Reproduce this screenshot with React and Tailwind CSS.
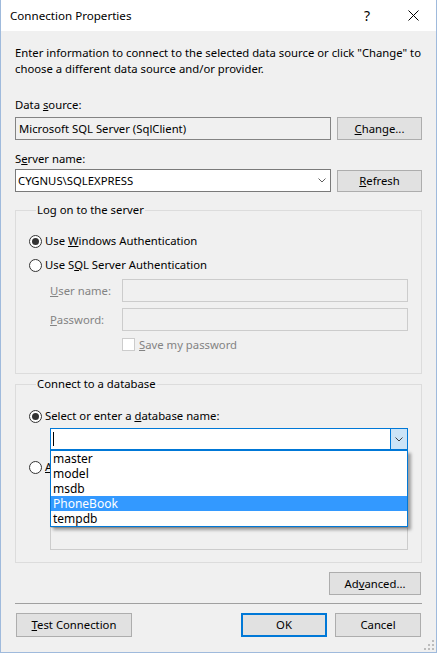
import React from 'react';

const font = { fontFamily: '"Noto Sans", "Open Sans", sans-serif' };

function Btn({ children, className = '', primary = false }) {
  return (
    <div
      className={`flex items-center justify-center bg-[#e1e1e1] text-black ${
        primary ? 'border-2 border-[#0078d7]' : 'border border-[#adadad]'
      } ${className}`}
    >
      {children}
    </div>
  );
}

function Radio({ checked, children }) {
  return (
    <div className="flex items-center h-[16px] gap-[3px]">
      <span className="flex items-center justify-center w-[13px] h-[13px] rounded-full border border-[#333333] bg-white shrink-0">
        {checked && <span className="w-[7px] h-[7px] rounded-full bg-[#333333]" />}
      </span>
      <span className="whitespace-nowrap">{children}</span>
    </div>
  );
}

function Chevron({ color = '#606060' }) {
  return (
    <svg width="8" height="5" viewBox="0 0 8 5">
      <path d="M0.5 0.5 L4 4 L7.5 0.5" fill="none" stroke={color} strokeWidth="1" />
    </svg>
  );
}

const databases = ['master', 'model', 'msdb', 'PhoneBook', 'tempdb'];

export default function App() {
  return (
    <div
      className="w-[437px] h-[653px] flex flex-col bg-[#f0f0f0] border-x border-b border-[#9fbadc] text-[11.3px] leading-[16px] text-black overflow-hidden select-none"
      style={font}
    >
      {/* Title bar */}
      <div className="h-[31px] shrink-0 bg-white flex items-center pl-[9px] text-[11.6px]">
        <span className="flex-1">Connection Properties</span>
        <span className="w-[46px] text-center text-[14px]">?</span>
        <span className="w-[46px] flex justify-center">
          <svg width="11" height="11" viewBox="0 0 11 11">
            <path d="M0.5 0.5 L10.5 10.5 M10.5 0.5 L0.5 10.5" stroke="#000" strokeWidth="1" />
          </svg>
        </span>
      </div>

      <div className="flex flex-col px-[14px]">
        <p className="mt-[14px]">
          Enter information to connect to the selected data source or click "Change" to choose a
          different data source and/or provider.
        </p>

        {/* Data source */}
        <div className="mt-[20px]">
          Data <u>s</u>ource:
        </div>
        <div className="mt-[4px] flex gap-[6px] h-[23px]">
          <div className="w-[316px] border border-[#838383] bg-[#f0f0f0] flex items-center pl-[3px]">
            Microsoft SQL Server (SqlClient)
          </div>
          <Btn className="w-[85px]">
            <span>
              <u>C</u>hange...
            </span>
          </Btn>
        </div>

        {/* Server name */}
        <div className="mt-[11px]">
          S<u>e</u>rver name:
        </div>
        <div className="mt-[2px] flex gap-[6px] h-[23px]">
          <div className="w-[316px] border border-[#7a7a7a] bg-white flex items-center pl-[2px]">
            <span className="flex-1">CYGNUS\SQLEXPRESS</span>
            <span className="w-[17px] flex justify-center">
              <Chevron />
            </span>
          </div>
          <Btn className="w-[85px] mt-[1px] h-[22px]">
            <span>
              <u>R</u>efresh
            </span>
          </Btn>
        </div>

        {/* Log on group */}
        <fieldset className="mt-[10px] border border-[#dcdcdc] pl-[13px] pr-[13px] pb-[22px]">
          <legend className="ml-[7px] px-[1px]">Log on to the server</legend>
          <div className="mt-[15px]">
            <Radio checked>
              Use <u>W</u>indows Authentication
            </Radio>
          </div>
          <div className="mt-[8px]">
            <Radio>
              Use S<u>Q</u>L Server Authentication
            </Radio>
          </div>
          <div className="mt-[6px] ml-[21px] flex items-center h-[23px] text-[#838383]">
            <span className="w-[72px]">
              <u>U</u>ser name:
            </span>
            <div className="flex-1 h-full border border-[#cccccc] bg-[#f0f0f0]" />
          </div>
          <div className="mt-[6px] ml-[21px] flex items-center h-[23px] text-[#838383]">
            <span className="w-[72px]">
              <u>P</u>assword:
            </span>
            <div className="flex-1 h-full border border-[#cccccc] bg-[#f0f0f0]" />
          </div>
          <div className="mt-[7px] ml-[93px] flex items-center h-[13px] gap-[4px] text-[#838383]">
            <span className="w-[13px] h-[13px] border border-[#cccccc] bg-white shrink-0" />
            <span>
              <u>S</u>ave my password
            </span>
          </div>
        </fieldset>

        {/* Connect to a database group */}
        <fieldset className="mt-[2px] border border-[#dcdcdc] pl-[13px] pr-[13px] pb-[12px]">
          <legend className="ml-[7px] px-[1px]">Connect to a database</legend>
          <div className="mt-[16px]">
            <Radio checked>
              Select or enter a <u>d</u>atabase name:
            </Radio>
          </div>
          <div className="relative mt-[4px] ml-[21px] z-10">
            <div className="h-[22px] border border-[#0078d7] bg-white flex">
              <div className="flex-1 flex items-center pl-[2px]">
                <span className="w-px h-[14px] bg-black" />
              </div>
              <div className="w-[17px] bg-[#cce4f7] border-l border-[#0078d7] flex items-center justify-center">
                <Chevron color="#404040" />
              </div>
            </div>
            {/* open dropdown list */}
            <ul className="absolute left-0 top-full w-full border border-[#0078d7] bg-white text-[12px] shadow-[3px_3px_3px_rgba(0,0,0,0.35)]">
              {databases.map((d) => (
                <li
                  key={d}
                  className={`h-[15px] leading-[15px] pl-[2px] ${
                    d === 'PhoneBook' ? 'bg-[#3399ff] text-white' : ''
                  }`}
                >
                  {d}
                </li>
              ))}
            </ul>
          </div>
          <div className="mt-[9px]">
            <Radio>
              <u>A</u>ttach a database file:
            </Radio>
          </div>
          <div className="mt-[6px] ml-[21px] h-[23px] border border-[#cccccc] bg-[#f0f0f0]" />
          <div className="mt-[23px] ml-[21px] h-[23px] border border-[#cccccc] bg-[#f0f0f0]" />
        </fieldset>

        <div className="mt-[9px] flex justify-end pr-[1px]">
          <Btn className="w-[92px] h-[23px]">
            <span>
              Ad<u>v</u>anced...
            </span>
          </Btn>
        </div>

        <div className="mt-[8px] h-px bg-[#a0a0a0]" />

        <div className="mt-[9px] flex items-center h-[24px] pr-[1px]">
          <Btn className="w-[116px] h-[24px] ml-[1px]">
            <span>
              <u>T</u>est Connection
            </span>
          </Btn>
          <div className="flex-1" />
          <Btn primary className="w-[86px] h-[24px]">
            OK
          </Btn>
          <Btn className="w-[86px] h-[24px] ml-[8px]">Cancel</Btn>
        </div>
      </div>

      {/* size grip */}
      <div className="flex-1 flex items-end justify-end pr-[2px] pb-[2px]">
        <svg width="10" height="10" viewBox="0 0 10 10">
          {[
            [8, 0],
            [8, 4],
            [4, 4],
            [8, 8],
            [4, 8],
            [0, 8],
          ].map(([x, y]) => (
            <rect key={`${x}-${y}`} x={x} y={y} width="2" height="2" fill="#bcbcbc" />
          ))}
        </svg>
      </div>
    </div>
  );
}
